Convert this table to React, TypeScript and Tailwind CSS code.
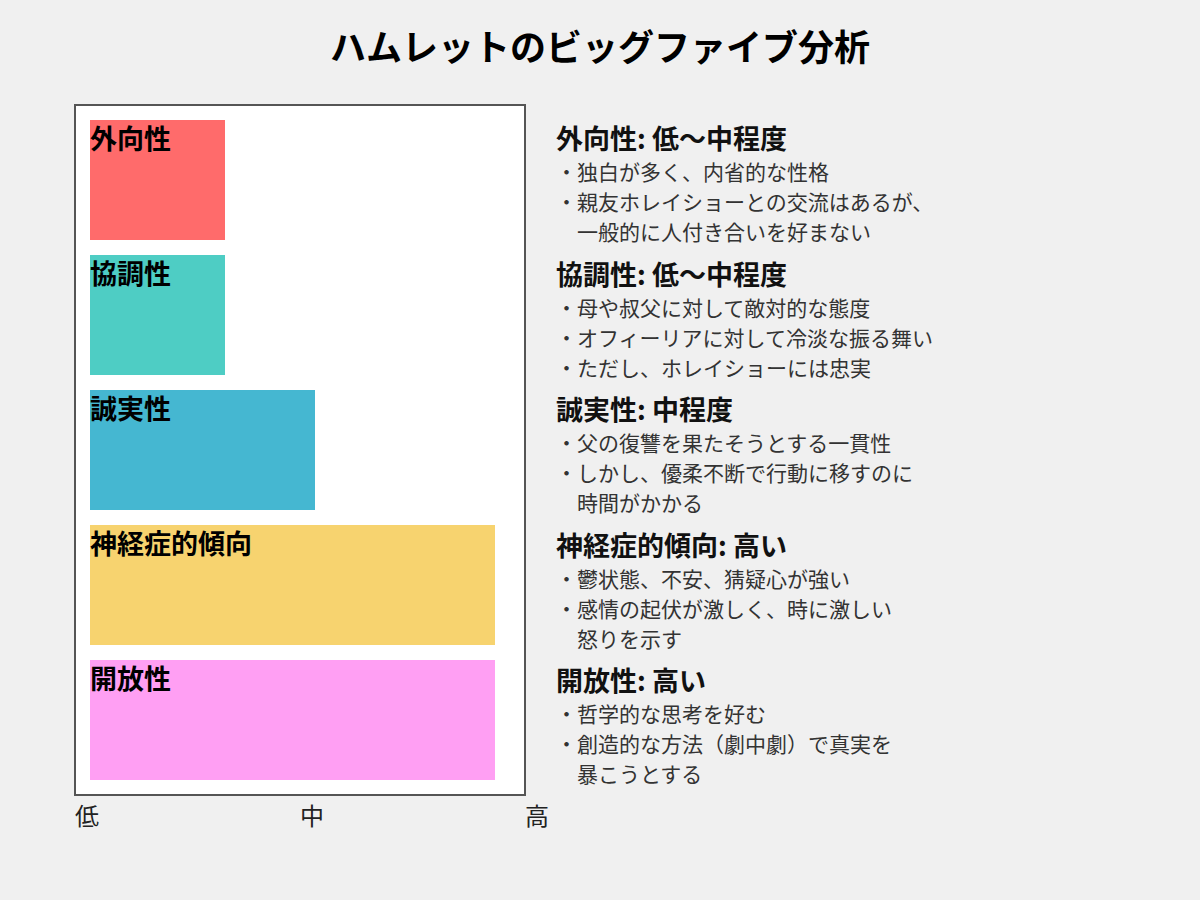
import React from "react";

const bars = [
  { label: "外向性", width: 135, color: "bg-[#FF6B6B]" },
  { label: "協調性", width: 135, color: "bg-[#4ECDC4]" },
  { label: "誠実性", width: 225, color: "bg-[#45B7D1]" },
  { label: "神経症的傾向", width: 405, color: "bg-[#F7D36F]" },
  { label: "開放性", width: 405, color: "bg-[#FF9FF3]" },
];

const sections: { title: string; items: string[][] }[] = [
  {
    title: "外向性: 低〜中程度",
    items: [["独白が多く、内省的な性格"], ["親友ホレイショーとの交流はあるが、", "一般的に人付き合いを好まない"]],
  },
  {
    title: "協調性: 低〜中程度",
    items: [["母や叔父に対して敵対的な態度"], ["オフィーリアに対して冷淡な振る舞い"], ["ただし、ホレイショーには忠実"]],
  },
  {
    title: "誠実性: 中程度",
    items: [["父の復讐を果たそうとする一貫性"], ["しかし、優柔不断で行動に移すのに", "時間がかかる"]],
  },
  {
    title: "神経症的傾向: 高い",
    items: [["鬱状態、不安、猜疑心が強い"], ["感情の起伏が激しく、時に激しい", "怒りを示す"]],
  },
  {
    title: "開放性: 高い",
    items: [["哲学的な思考を好む"], ["創造的な方法（劇中劇）で真実を", "暴こうとする"]],
  },
];

export default function App() {
  return (
    <div
      className="w-[1200px] h-[900px] bg-[#f0f0f0] overflow-hidden"
      style={{ fontFamily: '"Noto Sans CJK JP", "Noto Sans", sans-serif' }}
    >
      <h1 className="pt-[21px] h-[69px] text-center text-[36px] leading-[48px] font-bold text-black">
        ハムレットのビッグファイブ分析
      </h1>
      <div className="mt-[35px] flex">
        <div className="ml-[74px] w-[452px] shrink-0">
          <div className="w-[452px] border-2 border-[#555] bg-white p-[14px] flex flex-col gap-[15px]">
            {bars.map((b) => (
              <div key={b.label} className="h-[120px]">
                <div className={`h-full ${b.color}`} style={{ width: b.width }}>
                  <span className="block text-[27px] leading-[36px] font-bold text-black whitespace-nowrap">
                    {b.label}
                  </span>
                </div>
              </div>
            ))}
          </div>
          <div className="mt-[4px] flex pl-[1px] text-[24px] leading-[30px] text-[#222] whitespace-nowrap">
            <span className="w-[225px] shrink-0">低</span>
            <span className="w-[225px] shrink-0">中</span>
            <span className="shrink-0">高</span>
          </div>
        </div>
        <div className="ml-[30px] mt-[16px] flex flex-col gap-[9.5px]">
          {sections.map((s) => (
            <div key={s.title}>
              <div className="text-[27px] leading-[36px] font-bold text-[#111] whitespace-nowrap">{s.title}</div>
              {s.items.map((lines, i) => (
                <div key={i} className="flex text-[21px] leading-[30px] text-[#333]">
                  <span className="w-[21px] shrink-0">・</span>
                  <div>
                    {lines.map((l, j) => (
                      <div key={j} className="whitespace-nowrap">
                        {l}
                      </div>
                    ))}
                  </div>
                </div>
              ))}
            </div>
          ))}
        </div>
      </div>
    </div>
  );
}
